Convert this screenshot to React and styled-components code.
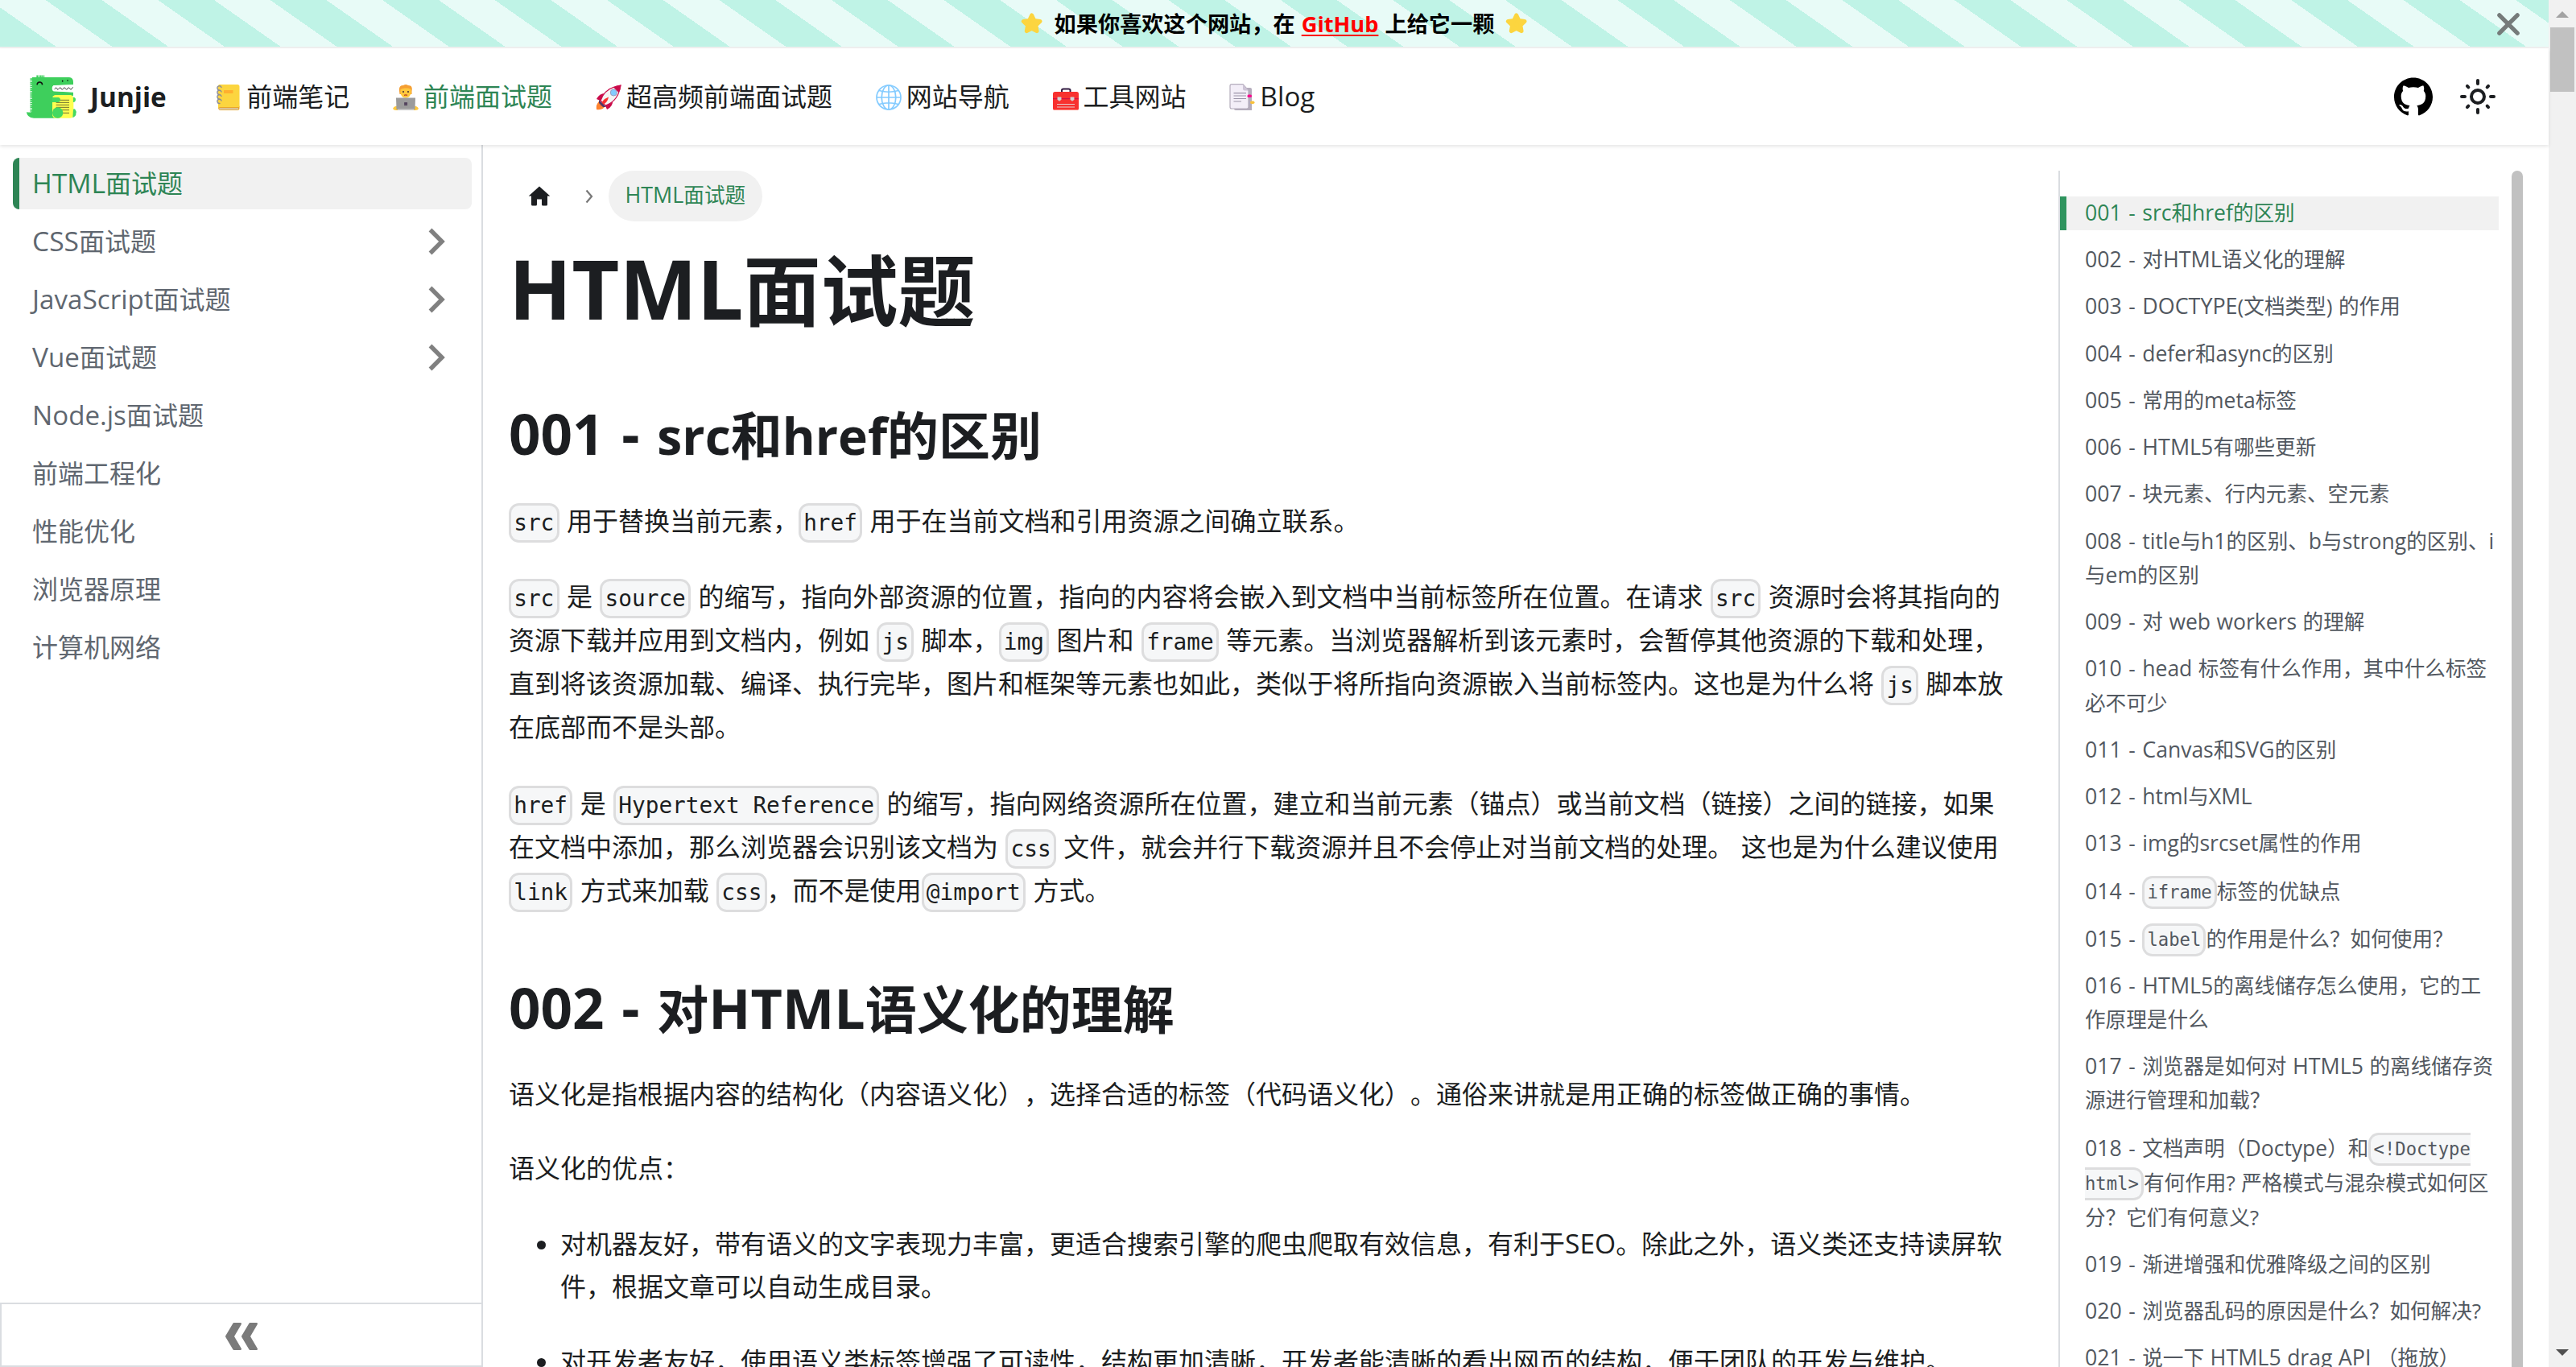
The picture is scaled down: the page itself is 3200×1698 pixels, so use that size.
import React from "react";
import styled, { createGlobalStyle, css } from "styled-components";

const SANS = '"Open Sans", "Noto Sans CJK SC", sans-serif';
const MONO = '"DejaVu Sans Mono", "Noto Sans CJK SC", monospace';
const GREEN = "#2e8555";
const LINE = "#dadde1";

const GlobalStyle = createGlobalStyle`
  * { box-sizing: border-box; }
  html, body { margin: 0; background: #fff; overflow: hidden; }
  body { font-family: ${SANS}; color: #1c1e21; font-size: 32px; text-spacing-trim: space-all; }
  ul, ol { list-style: none; margin: 0; padding: 0; }
  a { color: inherit; text-decoration: none; }
  svg { display: block; flex: none; }
`;

const Window = styled.div`
  display: flex;
  width: 3200px;
  height: 1698px;
  overflow: hidden;
`;

const Page = styled.div`
  flex: 1;
  min-width: 0;
  display: flex;
  flex-direction: column;
`;

/* ---------- inline text ---------- */

const Run = styled.span`
  line-height: 0;
  font-size: ${(p) => p.$scale}em;
  word-spacing: ${(p) => p.$space}em;
`;

const runScale = (part, bold) => {
  if (/[0-9]/.test(part)) return bold ? 1.08 : 1.04;
  if (/[A-Z]/.test(part)) return bold ? 1.065 : 1.05;
  if (/[a-z]/.test(part)) return bold ? 0.975 : 1.035;
  return bold ? 1.08 : 1.03;
};

function Text({ children, bold = false }) {
  return children.split(/([0-9]+|[A-Z]+|[a-z.]+|[ \-()?]+)/).map((part, i) => {
    if (!/^[\x20-\x7e]+$/.test(part)) return part;
    const space = bold ? 0.055 : part.includes("-") ? 0.065 : 0.025;
    return (
      <Run key={i} $scale={runScale(part, bold)} $space={space}>
        {part}
      </Run>
    );
  });
}

const Code = styled.code`
  font-family: ${MONO};
  font-size: ${(p) => (p.$small ? 22.2 : 27.77)}px;
  line-height: 0;
  padding: ${(p) => (p.$small ? "4.4px" : "5px")} 3.2px;
  border: 3px solid rgba(0, 0, 0, 0.1);
  border-radius: 12.8px;
  background: #f6f7f8;
`;

/* `text` may hold code fragments between backticks */
function Rich({ text, small = false }) {
  return text.split("`").map((part, i) => {
    if (i % 2) {
      return (
        <Code key={i} $small={small}>
          {part.includes("\n") ? part.split("\n").map((s, k) => (k ? <React.Fragment key={k}><br />{s}</React.Fragment> : s)) : part}
        </Code>
      );
    }
    return part.split("\n").map((s, k) => (
      <React.Fragment key={`${i}-${k}`}>
        {k > 0 && <br />}
        <Text>{s}</Text>
      </React.Fragment>
    ));
  });
}

/* ---------- announcement ---------- */

const Announcement = styled.div`
  height: 60px;
  flex: none;
  display: grid;
  grid-template-columns: 100px 1fr 100px;
  align-items: center;
  border-bottom: 2px solid #f0f0f0;
  background: repeating-linear-gradient(35deg, #bff3e6, #bff3e6 40px, #e8fbf7 40px, #e8fbf7 80px) padding-box;
`;

const AnnouncementText = styled.div`
  grid-column: 2;
  display: flex;
  justify-content: center;
  align-items: center;
  font-size: 27.2px;
  font-weight: 700;
  line-height: 59px;
  color: #000;
  white-space: pre;
  word-spacing: 1px;

  svg { margin: 0 6px; }
  a { color: #f00; text-decoration: underline; text-decoration-thickness: 2px; text-underline-offset: 3px; }
`;

const CloseButton = styled.div`
  grid-column: 3;
  display: flex;
  justify-content: flex-end;
  padding-right: 36px;
`;

/* ---------- navbar ---------- */

const Navbar = styled.nav`
  height: 120px;
  flex: none;
  display: flex;
  align-items: center;
  padding: 0 60px 0 32px;
  background: #fff;
  box-shadow: 0 2px 4px rgba(0, 0, 0, 0.1);
  z-index: 2;
`;

const Brand = styled.a`
  display: flex;
  align-items: center;
  gap: 16px;
  width: 206.5px;
  font-size: 33.3px;
  font-weight: 700;
  line-height: 52px;
`;

const NavItem = styled.a`
  display: flex;
  align-items: center;
  margin-right: ${(p) => (p.$last ? 0 : 48)}px;
  line-height: 52px;
  white-space: nowrap;
  color: ${(p) => (p.$active ? GREEN : "#1c1e21")};
`;

const NavIcon = styled.span`
  width: 43.8px;
  display: flex;
  justify-content: center;
  padding-top: 2px;
`;

const NavLinks = styled.div`
  display: flex;
  flex: 1;
  padding-left: 24px;
`;

const NavTools = styled.div`
  display: flex;
  align-items: center;
  gap: 28px;
`;

/* ---------- layout ---------- */

const Columns = styled.div`
  flex: 1;
  min-height: 0;
  display: flex;
`;

const Sidebar = styled.aside`
  width: 600px;
  flex: none;
  display: flex;
  flex-direction: column;
  border-right: 2px solid ${LINE};
`;

const Menu = styled.ul`
  flex: 1;
  display: flex;
  flex-direction: column;
  gap: 8px;
  padding: 16px 12px 0 16px;
`;

const MenuItem = styled.li`
  height: 64px;
  display: flex;
  align-items: center;
  justify-content: space-between;
  padding: 0 33px 0 24px;
  border-radius: 8px;
  line-height: 64px;
  color: #606770;
  ${(p) =>
    p.$active &&
    css`
      color: ${GREEN};
      background: #f1f1f1;
      border-left: 8px solid ${GREEN};
      padding-left: 16px;
    `}
`;

const CollapseButton = styled.div`
  height: 80px;
  margin-right: -2px;
  padding-top: 3px;
  display: flex;
  align-items: center;
  justify-content: center;
  border: 2px solid ${LINE};
  color: #7b7b7b;
`;

const Article = styled.main`
  width: 1957px;
  flex: none;
  padding: 32px 32px 0;
  overflow: hidden;
`;

const Breadcrumbs = styled.div`
  height: 63px;
  display: flex;
  align-items: center;
  padding-left: 24px;
`;

const CrumbArrow = styled.span`
  padding: 0 19px 0 43px;
`;

const Crumb = styled.span`
  height: 63px;
  padding: 0 20.5px;
  border-radius: 32px;
  background: #f1f1f1;
  color: ${GREEN};
  font-size: 25.6px;
  line-height: 62px;
`;

const Title = styled.h1`
  margin: 25px 0 80px;
  font-size: 96px;
  line-height: 120px;
  white-space: nowrap;
`;

const Heading = styled.h2`
  margin: 80px 0 38.5px;
  font-size: 64px;
  line-height: 81px;
  white-space: nowrap;
`;

const Paragraph = styled.p`
  margin: 0 0 40px;
  line-height: ${(p) => (p.$code ? 54.2 : 52.8)}px;
  white-space: nowrap;
`;

const Bullets = styled.ul`
  list-style: disc;
  padding: 1px 0 0 64px;
`;

const Bullet = styled.li`
  margin-bottom: 40px;
  line-height: 52.8px;
  white-space: nowrap;
`;

const TocColumn = styled.div`
  flex: 1;
  display: flex;
  padding-top: 32px;
  overflow: hidden;
`;

const Toc = styled.ul`
  width: 547px;
  height: 1486px;
  flex: none;
  padding-top: 32px;
  border-left: 2px solid ${LINE};
  overflow: hidden;
`;

const TocItem = styled.li`
  margin-bottom: 16px;
  padding-left: 31px;
  font-size: 25.6px;
  line-height: ${(p) => (p.$code ? 43.1 : 42.24)}px;
  white-space: nowrap;
  color: #525860;
  ${(p) =>
    p.$active &&
    css`
      color: ${GREEN};
      background: #f1f1f1;
      border-left: 8px solid #2f945e;
      padding-left: 23px;
    `}
`;

const TocThumb = styled.div`
  width: 14px;
  height: 1500px;
  margin-left: 16px;
  border-radius: 7px;
  background: #c1c1c1;
`;

const Scrollbar = styled.div`
  width: 34px;
  flex: none;
  display: flex;
  flex-direction: column;
  align-items: center;
  justify-content: space-between;
  padding: 14px 0;
  background: #f1f1f1;
`;

const ScrollTop = styled.div`
  display: flex;
  flex-direction: column;
  align-items: center;
  gap: 12px;
`;

const ScrollThumb = styled.div`
  width: 30px;
  height: 80px;
  background: #c1c1c1;
`;

/* ---------- drawings ---------- */

const Star = () => (
  <svg width="27.4" height="27.4" viewBox="0 0 32 32">
    <path
      d="M16 3.5l3.6 7.6 8.4 1.1-6.1 5.9 1.5 8.3L16 22.4l-7.4 4 1.5-8.3L4 12.200l8.400-1.100z"
      fill="#fcd53f"
      stroke="#fcd53f"
      strokeWidth="6"
      strokeLinejoin="round"
    />
  </svg>
);

const Logo = () => (
  <svg width="64" height="64" viewBox="24 24 192 192">
    <path d="M45 52V178M64 45H94" stroke="#3ecf5c" strokeWidth="9" strokeDasharray="5 2" fill="none" />
    <path
      d="M48 48H186Q201 49 201 66V76L126 79Q122 90 126 100L201 104V116L146 130 150 200H54Q28 198 27 177Q36 181 48 176Z"
      fill="#3ecf5c"
    />
    <path d="M201 76L130 78Q122 80 122 90Q122 99 130 100L201 103Z" fill="#fff" />
    <path d="M131 92l6-5 7 7 8-8 8 8 8-8 8 8 8-8 8 8 8-9" fill="none" stroke="#111" strokeWidth="2.500" />
    <path d="M66 76Q67 66 76 66T86 76" fill="none" stroke="#111" strokeWidth="4.500" />
    <circle cx="161" cy="62" r="2.500" />
    <circle cx="180" cy="60" r="2.500" />
    <rect x="123" y="114" width="79" height="86" rx="13" fill="#ffff50" />
    <path d="M137 133H186M137 142H186M137 151H186M137 160H186M137 170H186M150 181H186" stroke="#222" strokeWidth="2" />
    <path d="M122 123H145Q153 124 153 132T143 141H122Z" fill="#44d860" />
    <circle cx="143" cy="180" r="20" fill="#44d860" />
    <path d="M201 122q10 1 9 10t-9 9zM201 167q6-4 9 4 5 6 1 13 2 8-12 15z" fill="#44d860" />
  </svg>
);

const Ledger = () => (
  <svg width="32" height="32" viewBox="0 0 32 32">
    <path d="M3 4V28Q3 32 6 32H27Q29.500 32 29.500 29V27z" fill="#e8a72e" />
    <path d="M4 29.500H28V31H5z" fill="#d3d3d3" />
    <path d="M3 2Q3 0 5 0H27Q29.500 0 29.500 2.500V28H5.500Q3 28 3 30z" fill="#fcd53f" />
    <rect x="10" y="7" width="11.500" height="4" rx=".5" fill="#ffb02e" />
    <path
      d="M7 3.500A2.600 2.600 0 1 0 5 7M7 9A2.600 2.600 0 1 0 5 12.500M7 14.500A2.600 2.600 0 1 0 5 18M7 20A2.600 2.600 0 1 0 5 23.500"
      fill="none"
      stroke="#8d8d93"
      strokeWidth="1.400"
      strokeLinecap="round"
    />
  </svg>
);

const Technologist = () => (
  <svg width="32" height="32" viewBox="0 0 32 32">
    <path d="M0 30Q2 26 7 27L25 27Q30 26 32 30 31 32 28 32H4Q1 32 0 30z" fill="#ffc83d" />
    <path d="M8 8Q7 1 13 1 16-1 19 1 25 1 23.500 8V12H8.500z" fill="#f59f33" />
    <path d="M9.500 6Q13 4 16 4.500 20 4 22.500 6V11Q21 16.500 16 16.500T9.500 11z" fill="#ffc83d" />
    <circle cx="13" cy="9" r="1" fill="#402a32" />
    <circle cx="19" cy="9" r="1" fill="#402a32" />
    <path d="M14 13.300Q16 12.400 18 13.300" stroke="#b83b24" strokeWidth="1.400" fill="none" />
    <path d="M4 16.500H28L27.500 31H4.500z" fill="#9b9b9b" />
    <path d="M6 30.200H26V32H6z" fill="#c6c6c6" />
    <path d="M14.500 22.500h1.200v1.200h-1.200zM16.500 22.500h1.200v1.200h-1.200zM14.500 24.500h1.200v1.200h-1.200zM16.500 24.500h1.200v1.200h-1.200z" fill="#321b41" stroke="#321b41" strokeWidth=".4" />
  </svg>
);

const Rocket = () => (
  <svg width="32" height="32" viewBox="0 0 32 32">
    <path d="M1 31Q0 25 4 21L11 28Q7 32 1 31z" fill="#ff822d" />
    <path d="M13 11Q5 10 1 18L8 21zM21 19Q22 27 14 31L11 24z" fill="#ca0b4a" />
    <path d="M6 20Q11 4 31 1 28 21 12 26z" fill="#f4f4f4" stroke="#ca0b4a" strokeWidth="1.200" />
    <path d="M22 3.500Q27 1 31.500.5 31 6 28.500 10z" fill="#ca0b4a" />
    <circle cx="22.300" cy="10" r="4" fill="#83cbff" stroke="#9b9bc0" strokeWidth="1" />
    <path d="M6 27Q7 19 16 15.500 15 23 6 27z" fill="#f8312f" />
    <path d="M4 19L13 28 9 28 4 23z" fill="#533566" />
  </svg>
);

const Globe = () => (
  <svg width="32" height="32" viewBox="0 0 32 32" fill="none" stroke="#83cbff" strokeWidth="1.700">
    <circle cx="16" cy="16" r="15" />
    <ellipse cx="16" cy="16" rx="8.800" ry="15" />
    <path d="M16 1V31M1 16H31M4 7.500Q16 11 28 7.500M4 24.500Q16 21 28 24.500" />
  </svg>
);

const Toolbox = () => (
  <svg width="32" height="32" viewBox="0 0 32 32">
    <path d="M11 10V7Q11 5.500 13 5.500H19.500Q21.500 5.500 21.500 7V10" fill="none" stroke="#321b41" strokeWidth="2" />
    <rect x="0" y="9" width="32" height="23" rx="2.500" fill="#f8312f" />
    <path d="M0 17.700H32" stroke="#ca0b4a" strokeWidth="1" />
    <path d="M5.800 15.800h4.400v3l-2.200 1.600-2.200-1.600zM21.800 15.800h4.400v3L24 20.400l-2.200-1.600z" fill="#d3d3d3" stroke="#d3d3d3" strokeWidth=".5" />
    <path d="M5 24.500H27M5 28H27" stroke="#e8c9c9" strokeWidth="1.200" />
    <path d="M1 31.500H31" stroke="#ff8a80" strokeWidth="1" />
  </svg>
);

const BookmarkTabs = () => (
  <svg width="34" height="34" viewBox="0 0 34 34">
    <path d="M8 5H27Q29 5 29 7V33H9Q7 33 7 31z" fill="#b4acbc" />
    <path d="M4 .7H18L25 8.500V29Q25 31 23 31H4Q2 31 2 29V2.700Q2 .7 4 .7z" fill="#f3eef8" stroke="#b4acbc" strokeWidth="1.200" />
    <path d="M18 .7V6.500Q18 8.500 20 8.500H25z" fill="#cdc4d6" />
    <path d="M6.500 11.700H22M6.500 15H22M6.500 18.500H22M6.500 22H16" stroke="#9b93a8" strokeWidth="1.200" />
    <rect x="23.500" y="13.500" width="5.500" height="3.600" rx="1.600" fill="#f70a8d" />
    <rect x="27" y="21.500" width="5.500" height="3.600" rx="1.800" fill="#f9c23c" />
  </svg>
);

const Close = () => (
  <svg width="28" height="28" viewBox="0 0 28 28" stroke="#757b7a" strokeWidth="5.200" strokeLinecap="round">
    <path d="M2.800 2.800L25.200 25.200M25.200 2.800L2.800 25.200" />
  </svg>
);

const GitHub = () => (
  <svg width="48" height="48" viewBox="0 0 24 24">
    <path d="M12 .297c-6.630 0-12 5.373-12 12 0 5.303 3.438 9.800 8.205 11.385.6.113.82-.258.82-.577 0-.285-.01-1.040-.015-2.040-3.338.724-4.042-1.610-4.042-1.610C4.422 18.070 3.633 17.700 3.633 17.700c-1.087-.744.084-.729.084-.729 1.205.084 1.838 1.236 1.838 1.236 1.070 1.835 2.809 1.305 3.495.998.108-.776.417-1.305.76-1.605-2.665-.3-5.466-1.332-5.466-5.930 0-1.310.465-2.380 1.235-3.220-.135-.303-.54-1.523.105-3.176 0 0 1.005-.322 3.300 1.230.96-.267 1.980-.399 3-.405 1.020.006 2.040.138 3 .405 2.280-1.552 3.285-1.230 3.285-1.230.645 1.653.24 2.873.12 3.176.765.840 1.230 1.910 1.230 3.220 0 4.610-2.805 5.625-5.475 5.920.42.360.81 1.096.81 2.220 0 1.606-.015 2.896-.015 3.286 0 .315.21.690.825.570C20.565 22.092 24 17.592 24 12.297c0-6.627-5.373-12-12-12" />
  </svg>
);

const Sun = () => (
  <svg width="56" height="48" viewBox="-28 -24 56 48" fill="none" stroke="#1c1e21" strokeWidth="4" strokeLinecap="round">
    <circle r="8" />
    {[0, 45, 90, 135, 180, 225, 270, 315].map((a) => (
      <path key={a} d={a % 90 ? "M16.500 0H18.500" : "M16 0H20"} transform={`rotate(${a})`} />
    ))}
  </svg>
);

const Chevron = () => (
  <svg width="21" height="34" viewBox="0 0 21 34" fill="none" stroke="#808080" strokeWidth="5.400">
    <path d="M2.500 2.500L17 17 2.500 31.500" />
  </svg>
);

const DoubleChevron = () => (
  <svg width="40" height="34" viewBox="0 0 40 34" fill="currentColor" stroke="currentColor" strokeWidth="2.500" strokeLinejoin="round">
    <path d="M1.300 17L10.500 1.300H18.700L9.500 17 18.700 32.700H10.500z" />
    <path d="M21.300 17L30.500 1.300H38.700L29.500 17 38.700 32.700H30.500z" />
  </svg>
);

const Home = () => (
  <svg width="28" height="25" viewBox="0 0 28 25">
    <path
      d="M14 .5L27.300 12.500H24V23Q24 24.500 22.500 24.500H18.500Q17 24.500 17 23V16.500H11V23Q11 24.500 9.500 24.500H5.500Q4 24.500 4 23V12.500H.7z"
      fill="#1c1e21"
    />
  </svg>
);

const SmallArrow = () => (
  <svg width="10" height="18" viewBox="0 0 10 18" fill="none" stroke="#777" strokeWidth="2.200">
    <path d="M1.500 1.500L8 9 1.500 16.500" />
  </svg>
);

const Triangle = ({ down }) => (
  <svg width="16" height="8" viewBox="0 0 16 8">
    <path d={down ? "M0 0H16L8 8z" : "M8 0L16 8H0z"} fill={down ? "#505050" : "#a3a3a3"} />
  </svg>
);

/* ---------- content ---------- */

const NAV = [
  [Ledger, "前端笔记"],
  [Technologist, "前端面试题", true],
  [Rocket, "超高频前端面试题"],
  [Globe, "网站导航"],
  [Toolbox, "工具网站"],
  [BookmarkTabs, "Blog"],
];

const MENU = [
  ["HTML面试题"],
  ["CSS面试题", true],
  ["JavaScript面试题", true],
  ["Vue面试题", true],
  ["Node.js面试题"],
  ["前端工程化"],
  ["性能优化"],
  ["浏览器原理"],
  ["计算机网络"],
];

const TOC = [
  "001 - src和href的区别",
  "002 - 对HTML语义化的理解",
  "003 - DOCTYPE(文档类型) 的作用",
  "004 - defer和async的区别",
  "005 - 常用的meta标签",
  "006 - HTML5有哪些更新",
  "007 - 块元素、行内元素、空元素",
  "008 - title与h1的区别、b与strong的区别、i\n与em的区别",
  "009 - 对 web workers 的理解",
  "010 - head 标签有什么作用，其中什么标签\n必不可少",
  "011 - Canvas和SVG的区别",
  "012 - html与XML",
  "013 - img的srcset属性的作用",
  "014 - `iframe`标签的优缺点",
  "015 - `label`的作用是什么？如何使用？",
  "016 - HTML5的离线储存怎么使用，它的工\n作原理是什么",
  "017 - 浏览器是如何对 HTML5 的离线储存资\n源进行管理和加载？",
  "018 - 文档声明（Doctype）和`<!Doctype\nhtml>`有何作用? 严格模式与混杂模式如何区\n分？它们有何意义?",
  "019 - 渐进增强和优雅降级之间的区别",
  "020 - 浏览器乱码的原因是什么？如何解决?",
  "021 - 说一下 HTML5 drag API （拖放）",
];

const P1 = "`src` 用于替换当前元素，`href` 用于在当前文档和引用资源之间确立联系。";
const P2 =
  "`src` 是 `source` 的缩写，指向外部资源的位置，指向的内容将会嵌入到文档中当前标签所在位置。在请求 `src` 资源时会将其指向的\n" +
  "资源下载并应用到文档内，例如 `js` 脚本，`img` 图片和 `frame` 等元素。当浏览器解析到该元素时，会暂停其他资源的下载和处理，\n" +
  "直到将该资源加载、编译、执行完毕，图片和框架等元素也如此，类似于将所指向资源嵌入当前标签内。这也是为什么将 `js` 脚本放\n" +
  "在底部而不是头部。";
const P3 =
  "`href` 是 `Hypertext Reference` 的缩写，指向网络资源所在位置，建立和当前元素（锚点）或当前文档（链接）之间的链接，如果\n" +
  "在文档中添加，那么浏览器会识别该文档为 `css` 文件，就会并行下载资源并且不会停止对当前文档的处理。 这也是为什么建议使用\n" +
  "`link` 方式来加载 `css`，而不是使用`@import` 方式。";

export default function App() {
  return (
    <Window>
      <GlobalStyle />
      <Page>
        <Announcement>
          <AnnouncementText>
            <Star />
            <span>
              {" "}如果你喜欢这个网站，在 <a>GitHub</a> 上给它一颗{" "}
            </span>
            <Star />
          </AnnouncementText>
          <CloseButton>
            <Close />
          </CloseButton>
        </Announcement>
        <Navbar>
          <Brand>
            <Logo />
            <span>Junjie</span>
          </Brand>
          <NavLinks>
            {NAV.map(([Icon, label, active], i) => (
              <NavItem key={label} $active={active} $last={i === NAV.length - 1}>
                <NavIcon>
                  <Icon />
                </NavIcon>
                <span>
                  <Text>{label}</Text>
                </span>
              </NavItem>
            ))}
          </NavLinks>
          <NavTools>
            <GitHub />
            <Sun />
          </NavTools>
        </Navbar>
        <Columns>
          <Sidebar>
            <Menu>
              {MENU.map(([label, expandable], i) => (
                <MenuItem key={label} $active={i === 0}>
                  <span>
                    <Text>{label}</Text>
                  </span>
                  {expandable && <Chevron />}
                </MenuItem>
              ))}
            </Menu>
            <CollapseButton>
              <DoubleChevron />
            </CollapseButton>
          </Sidebar>
          <Article>
            <Breadcrumbs>
              <Home />
              <CrumbArrow>
                <SmallArrow />
              </CrumbArrow>
              <Crumb>
                <Text>HTML面试题</Text>
              </Crumb>
            </Breadcrumbs>
            <Title>
              <Text bold>HTML面试题</Text>
            </Title>
            <Heading>
              <Text bold>001 - src和href的区别</Text>
            </Heading>
            <Paragraph $code><Rich text={P1} /></Paragraph>
            <Paragraph $code><Rich text={P2} /></Paragraph>
            <Paragraph $code><Rich text={P3} /></Paragraph>
            <Heading>
              <Text bold>002 - 对HTML语义化的理解</Text>
            </Heading>
            <Paragraph>
              语义化是指根据内容的结构化（内容语义化），选择合适的标签（代码语义化）。通俗来讲就是用正确的标签做正确的事情。
            </Paragraph>
            <Paragraph>语义化的优点：</Paragraph>
            <Bullets>
              <Bullet>
                <Rich
                  text={
                    "对机器友好，带有语义的文字表现力丰富，更适合搜索引擎的爬虫爬取有效信息，有利于SEO。除此之外，语义类还支持读屏软\n件，根据文章可以自动生成目录。"
                  }
                />
              </Bullet>
              <Bullet>
                对开发者友好，使用语义类标签增强了可读性，结构更加清晰，开发者能清晰的看出网页的结构，便于团队的开发与维护。
              </Bullet>
            </Bullets>
          </Article>
          <TocColumn>
            <Toc>
              {TOC.map((text, i) => (
                <TocItem key={text} $active={i === 0} $code={text.includes("`")}>
                  <Rich text={text} small />
                </TocItem>
              ))}
            </Toc>
            <TocThumb />
          </TocColumn>
        </Columns>
      </Page>
      <Scrollbar>
        <ScrollTop>
          <Triangle />
          <ScrollThumb />
        </ScrollTop>
        <Triangle down />
      </Scrollbar>
    </Window>
  );
}
